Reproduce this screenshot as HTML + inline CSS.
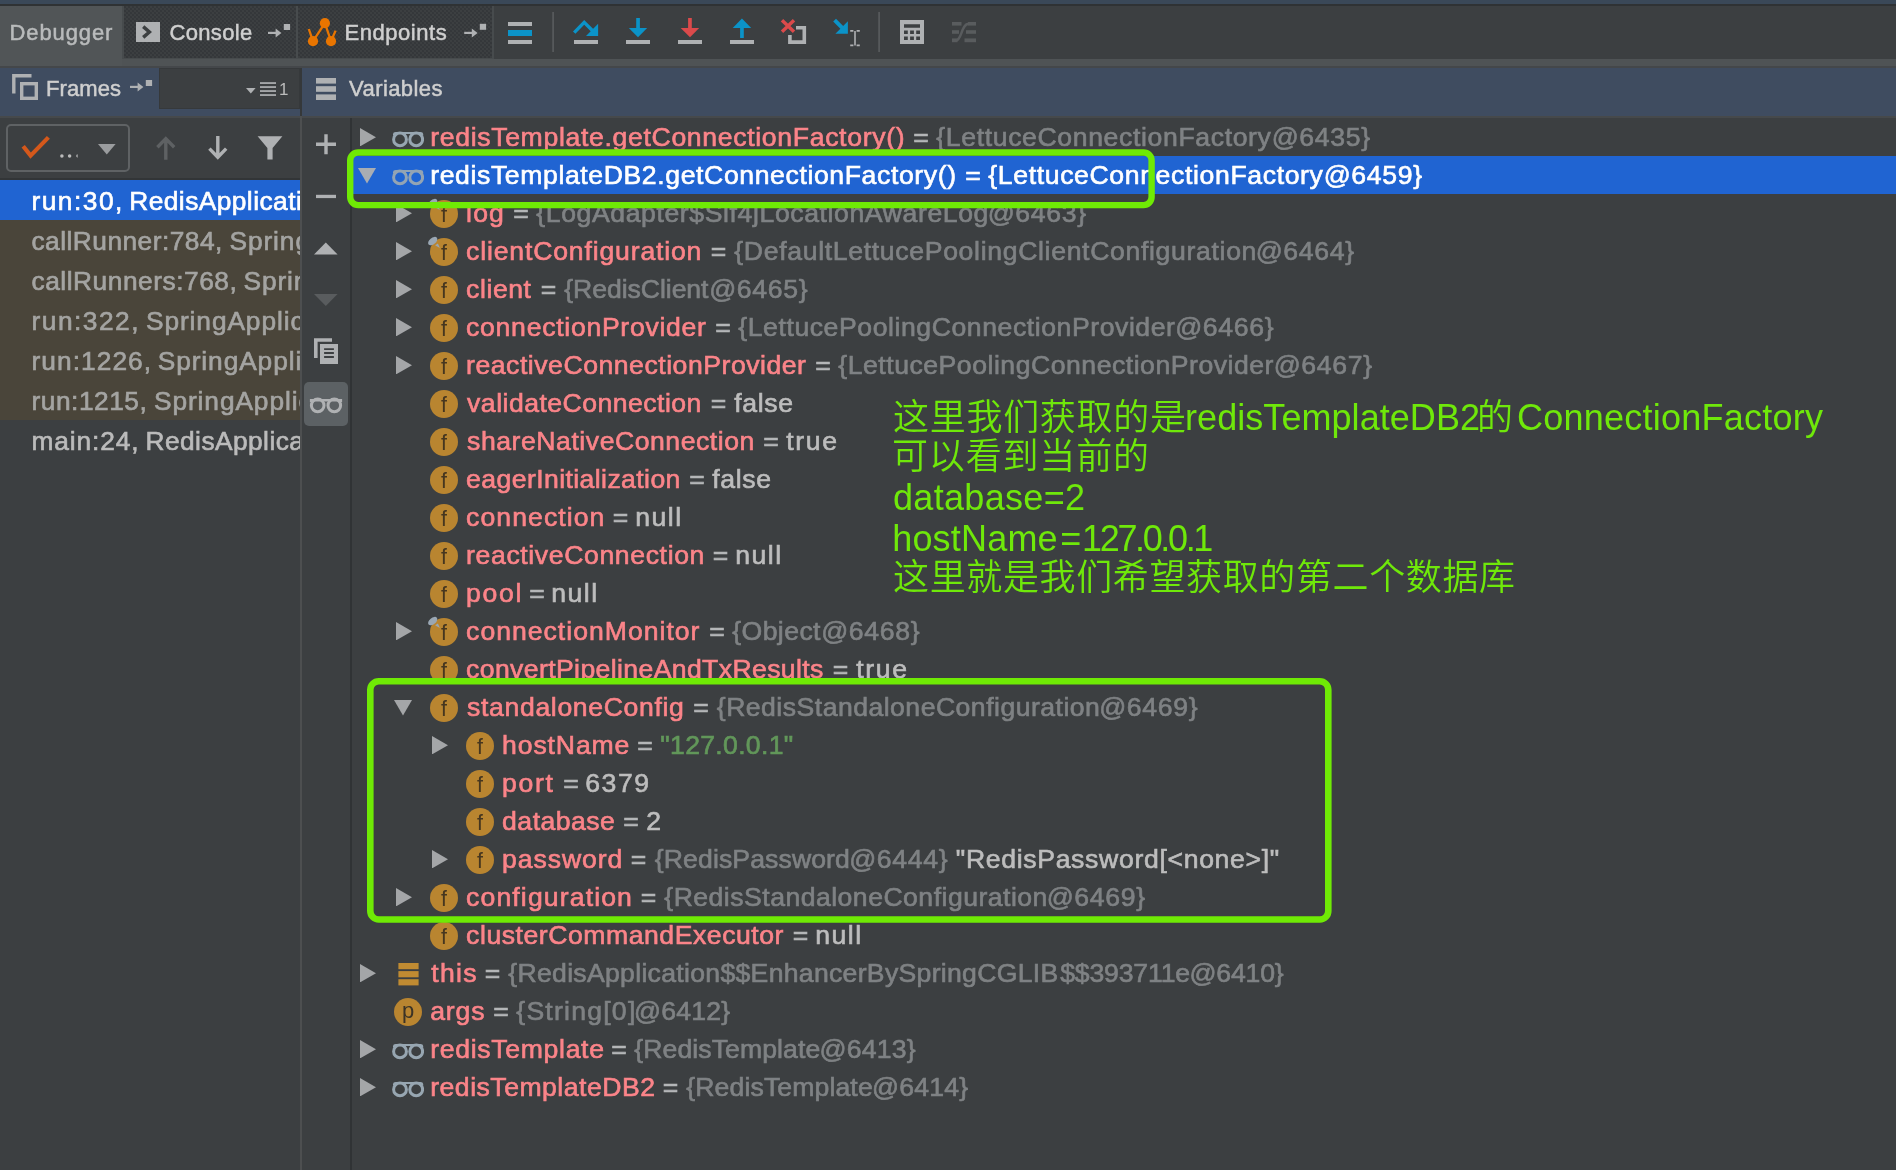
<!DOCTYPE html>
<html lang="zh"><head><meta charset="utf-8"><title>Debugger</title>
<style>
*{margin:0;padding:0;box-sizing:border-box}
html,body{width:1896px;height:1170px;overflow:hidden;background:#3c3f41}
body{position:relative;font-family:"Liberation Sans", "Noto Sans CJK SC", sans-serif;color:#bbb}
#root{position:absolute;left:0;top:0;width:1896px;height:1170px;overflow:hidden;will-change:transform}
.ab{position:absolute;display:block}
.p{display:inline-block;width:0;position:relative;white-space:pre;vertical-align:baseline}
.sp{font-size:0}
.t{position:absolute;white-space:pre;font-size:26.6px;height:38px;line-height:38.6px;-webkit-text-stroke:0.65px currentColor}
.n{color:#fb8489}
.e{color:#b4b6b8}
.g{color:#7f8284}
.w{color:#bdbdbd}
.s{color:#62975a}
.sel{color:#fff}
.ft{position:absolute;white-space:pre;font-size:26.3px;height:40px;line-height:42.4px;-webkit-text-stroke:0.65px currentColor}
.fsel{color:#fff}
.fdim{color:#a4a4a2}
.fnorm{color:#bbbbbb}
.hl{position:absolute;white-space:pre;color:#cfcfcf;-webkit-text-stroke:0.5px currentColor}
.dbg{color:#b9bbbc}
.dots{background-color:#3c3f41;background-image:radial-gradient(circle at 1px 1px,#34373a 0.7px,transparent 0.85px),radial-gradient(circle at 3px 3px,#34373a 0.7px,transparent 0.85px);background-size:4px 4px}
.an{position:absolute;white-space:pre;font-size:36px;height:50px;line-height:50px;color:#6fe80a;font-weight:350}
</style></head>
<body><div id="root">
<!-- top strip -->
<div class="ab" style="left:0;top:0;width:1896px;height:4px;background:#3a4858"></div>
<div class="ab" style="left:0;top:4px;width:1896px;height:2px;background:#2f3234"></div>
<!-- tab bar -->
<div class="ab" style="left:0;top:6px;width:1896px;height:52px;background:#3c3f41"></div>
<div class="ab" style="left:0;top:6px;width:122px;height:60px;background:#515557"></div>
<div class="ab" style="left:122px;top:6px;width:372px;height:53px;background:#474b4d"></div>
<div class="ab dots" style="left:124px;top:6px;width:172px;height:52px"></div>
<div class="ab dots" style="left:298px;top:6px;width:194px;height:52px"></div>
<div class="ab" style="left:122px;top:59px;width:1774px;height:7px;background:#4f5355"></div>
<div class="ab" style="left:0;top:66px;width:1896px;height:1.5px;background:#44474a"></div>
<!-- header band -->
<div class="ab" style="left:0;top:67.5px;width:1896px;height:48px;background:#3f4c60"></div>
<div class="ab" style="left:0;top:115.5px;width:1896px;height:2.5px;background:#46494b"></div>
<div class="ab" style="left:159px;top:67.5px;width:141px;height:41.5px;background:#3c3f41;border:1px solid #36393b"></div>
<!-- splitters -->
<div class="ab" style="left:300px;top:67.5px;width:2px;height:1103px;background:#35383a"></div>
<div class="ab" style="left:300.4px;top:116px;width:1.5px;height:1054px;background:#4d4f50"></div>
<div class="ab" style="left:350px;top:118px;width:2px;height:1052px;background:#303335"></div>
<div class="ab" style="left:0;top:178px;width:300px;height:2px;background:#323537"></div>

<!-- tab icons -->
<svg class="ab" style="left:0;top:0" width="1000" height="118" viewBox="0 0 1000 118">
 <!-- console icon -->
 <rect x="136" y="22" width="24" height="20" fill="#afb1b3"/>
 <path d="M143.2 26.6 L149.4 32 L143.2 37.4" fill="none" stroke="#3c3f41" stroke-width="3.4"/>
 <!-- console pin arrow -->
 <g fill="#afb1b3">
  <rect x="268" y="31.8" width="9" height="2.2"/><path d="M275.6 28.4 L281.4 32.9 L275.6 37.6Z"/><rect x="283.8" y="24" width="6.3" height="6"/>
  <rect x="464.2" y="31.8" width="9" height="2.2"/><path d="M471.8 28.4 L477.6 32.9 L471.8 37.6Z"/><rect x="479.8" y="23.8" width="6.3" height="6"/>
  <rect x="130" y="85.8" width="9" height="2.2"/><path d="M137.6 82.4 L143.4 86.9 L137.6 91.6Z"/><rect x="145.8" y="80" width="6.3" height="6"/>
 </g>
 <!-- endpoints icon -->
 <g fill="#e97500" stroke="#e97500">
  <circle cx="324.9" cy="23.2" r="5.1" stroke="none"/><circle cx="313" cy="41.2" r="5.1" stroke="none"/><circle cx="331" cy="41.2" r="5.1" stroke="none"/>
  <path d="M324.9 23.2 L313 41.2 M324.9 23.2 L331 41.2 M313 41.2 L308.8 29 M331 41.2 L335.6 30.6" stroke-width="2.3" fill="none"/>
 </g>
 <!-- show execution point -->
 <rect x="508" y="22" width="24" height="4" fill="#afb1b3"/><rect x="508" y="30" width="24" height="6" fill="#0b93c8"/><rect x="508" y="40" width="24" height="4" fill="#afb1b3"/>
 <rect x="552.2" y="12" width="1.8" height="40" fill="#56595b"/>
 <!-- step over -->
 <path d="M574.2 32.6 L584.2 22.4 L592.6 30.8" fill="none" stroke="#0b93c8" stroke-width="3.4"/>
 <path d="M598.1 23.8 L598.1 35.9 L586 35.9Z" fill="#0b93c8"/>
 <rect x="574" y="40" width="24" height="4" fill="#afb1b3"/>
 <!-- step into -->
 <rect x="636.2" y="18" width="3.7" height="11" fill="#0b93c8"/><path d="M628.8 28 L647.2 28 L638 37.2Z" fill="#0b93c8"/>
 <rect x="626" y="40" width="24" height="4" fill="#afb1b3"/>
 <!-- force step into -->
 <rect x="688.1" y="18" width="3.7" height="11" fill="#db4a4b"/><path d="M680.7 28 L699.2 28 L690 37.2Z" fill="#db4a4b"/>
 <rect x="678" y="40" width="24" height="4" fill="#afb1b3"/>
 <!-- step out -->
 <rect x="740.1" y="27" width="3.7" height="11" fill="#0b93c8"/><path d="M732.7 27.9 L751.2 27.9 L741.95 18.6Z" fill="#0b93c8"/>
 <rect x="730" y="40" width="24" height="4" fill="#afb1b3"/>
 <!-- drop frame -->
 <path d="M796 27.8 L804.3 27.8 L804.3 42.1 L789.9 42.1 L789.9 35" fill="none" stroke="#afb1b3" stroke-width="3.6"/>
 <path d="M782 20.2 L794 31.8 M794 20.2 L782 31.8" stroke="#db4a4b" stroke-width="3.4" fill="none"/>
 <!-- run to cursor -->
 <path d="M834.6 20.2 L844 29.6" stroke="#0b93c8" stroke-width="4" fill="none"/>
 <path d="M847.9 21.3 L847.9 33.8 L835.4 33.8Z" fill="#0b93c8"/>
 <path d="M855 31 L855 45.4 M850.2 30.9 L853.4 30.9 M856.6 30.9 L859.8 30.9 M850.2 45.4 L853.4 45.4 M856.6 45.4 L859.8 45.4" stroke="#afb1b3" stroke-width="1.6" fill="none"/>
 <rect x="878.2" y="12" width="1.8" height="40" fill="#56595b"/>
 <!-- calculator -->
 <path fill-rule="evenodd" fill="#afb1b3" d="M900 20h24v24h-24z M904 24.2v3.5h16v-3.5z M904 30.4v3.5h3.8v-3.5z M910.1 30.4v3.5h3.8v-3.5z M916.2 30.4v3.5h3.8v-3.5z M904 36.4v3.5h3.8v-3.5z M910.1 36.4v3.5h3.8v-3.5z M916.2 36.4v3.5h3.8v-3.5z"/>
 <!-- trace (disabled) -->
 <g fill="#595c5e"><rect x="952" y="22" width="9.5" height="3.6"/><rect x="952" y="30.2" width="7" height="3.6"/><rect x="952" y="38.4" width="5.5" height="3.8"/>
 <rect x="968" y="22" width="8" height="3.6"/><rect x="966" y="30.2" width="10" height="3.6"/><rect x="964.5" y="38.4" width="11.5" height="3.8"/></g>
 <path d="M956 40.4 C962 40.4 961 23.8 969 23.8" fill="none" stroke="#595c5e" stroke-width="2.4"/>
 <!-- frames icon -->
 <path d="M13.8 93.5 L13.8 75.8 L31.5 75.8" fill="none" stroke="#afb1b3" stroke-width="3.4"/>
 <rect x="21.7" y="83.7" width="14.6" height="14.6" fill="none" stroke="#afb1b3" stroke-width="3.4"/>
 <!-- thread dropdown mini -->
 <path d="M246 88 L255.6 88 L250.8 93.6Z" fill="#afb1b3"/>
 <g fill="#afb1b3"><rect x="260" y="82.2" width="16" height="1.7"/><rect x="260" y="86.2" width="16" height="1.7"/><rect x="260" y="90.2" width="16" height="1.7"/><rect x="260" y="94.2" width="16" height="1.7"/></g>
 <!-- variables icon -->
 <g fill="#afb1b3"><rect x="316" y="78" width="20" height="5.6"/><rect x="316" y="86.2" width="20" height="5.6"/><rect x="316" y="94.4" width="20" height="5.6"/></g>
</svg>
<span class="ab" style="left:279px;top:80px;font-size:17px;line-height:20px;color:#bcbcbc">1</span>

<!-- frames toolbar -->
<div class="ab" style="left:6px;top:124px;width:124px;height:48px;border:2px solid #5f6264;border-radius:5px"></div>
<svg class="ab" style="left:0;top:118px" width="360" height="320" viewBox="0 118 360 320">
 <path d="M23.2 146.2 L30.6 155.6 L48.4 137.4" fill="none" stroke="#d4581b" stroke-width="4.2"/>
 <g fill="#bbb"><circle cx="61.9" cy="156" r="1.75"/><circle cx="69.6" cy="156" r="1.75"/><path d="M77.6 154.3 A1.75 1.75 0 0 0 77.6 157.7Z"/></g>
 <path d="M98 144 L115.6 144 L106.8 154.6Z" fill="#9a9c9e"/>
 <!-- up (disabled) -->
 <path d="M165.8 159.8 L165.8 139.4 M157.4 147.2 L165.8 138.6 L174.2 147.2" fill="none" stroke="#5e6163" stroke-width="3.4"/>
 <!-- down -->
 <path d="M217.8 136 L217.8 156.4 M209.4 148.6 L217.8 157.2 L226.2 148.6" fill="none" stroke="#afb1b3" stroke-width="3.4"/>
 <!-- filter -->
 <path d="M257.6 136.2 L282.4 136.2 L272.6 148 L272.6 159.6 L267.4 159.6 L267.4 148Z" fill="#afb1b3"/>
 <!-- vars side toolbar -->
 <path d="M316 144.3 L336 144.3 M326 134.3 L326 154.3" stroke="#afb1b3" stroke-width="3.4" fill="none"/>
 <rect x="316" y="194.8" width="20" height="3.3" fill="#afb1b3"/>
 <path d="M314 254.6 L337.6 254.6 L325.8 242.6Z" fill="#afb1b3"/>
 <path d="M314 294 L337.6 294 L325.8 306Z" fill="#595c5e"/>
 <path d="M315.8 358 L315.8 340 L332 340" fill="none" stroke="#afb1b3" stroke-width="3.6"/>
 <path fill-rule="evenodd" fill="#afb1b3" d="M320 344.1h18v19.8h-18z M324.1 348.2v1.8h9.8v-1.8z M324.1 352.1v1.8h9.8v-1.8z M324.1 356.1v1.8h9.8v-1.8z"/>
 <rect x="304" y="382" width="44" height="44" rx="5" fill="#5c6164"/>
 <g fill="none" stroke="#afb1b3" stroke-width="3"><circle cx="317.7" cy="405.4" r="6.3"/><circle cx="334.3" cy="405.4" r="6.3"/><path d="M311.2 402 L311.2 400.2 L340.8 400.2 L340.8 402" stroke-width="2.6"/></g>
</svg>

<!-- variables tree -->
<svg class="ab" style="left:360px;top:127.6px" width="16" height="18.4" viewBox="0 0 16 18.4"><path d="M0 0 L16 9.2 L0 18.4Z" fill="#a4a6a8"/></svg>
<svg class="ab" style="left:392px;top:128.5px" width="32" height="20" viewBox="0 0 32 20"><g fill="none" stroke="#97a6b1" stroke-width="3"><circle cx="8" cy="10.4" r="6.4"/><circle cx="24.2" cy="10.4" r="6.4"/></g><path d="M1 6.4 L1 5 Q1.2 2.9 3.6 2.9 L28.6 2.9 Q31 2.9 31.2 5 L31.2 6.4 L28 4.9 L4.2 4.9Z" fill="#97a6b1"/></svg>
<div class="t" style="left:430.20px;top:118px"><span class="p n" id="r0_0" style="left:0.00px;letter-spacing:0.672px">redisTemplate.getConnectionFactory()</span><span class="sp"> </span><span class="p e" id="r0_1" style="left:483.10px;letter-spacing:0.000px">=</span><span class="sp"> </span><span class="p g" id="r0_2" style="left:506.10px;letter-spacing:0.637px">{LettuceConnectionFactory</span><span class="p g" id="r0_3" style="left:841.50px;letter-spacing:0.689px">@6435}</span></div>
<div class="ab" style="left:352px;top:156px;width:1544px;height:38px;background:#2064d2"></div>
<svg class="ab" style="left:357.8px;top:168.25px" width="18" height="15.5" viewBox="0 0 18 15.5"><path d="M0 0 L18 0 L9 15.5Z" fill="#a9adb3"/></svg>
<svg class="ab" style="left:392px;top:166.5px" width="32" height="20" viewBox="0 0 32 20"><g fill="none" stroke="#93a4b4" stroke-width="3"><circle cx="8" cy="10.4" r="6.4"/><circle cx="24.2" cy="10.4" r="6.4"/></g><path d="M1 6.4 L1 5 Q1.2 2.9 3.6 2.9 L28.6 2.9 Q31 2.9 31.2 5 L31.2 6.4 L28 4.9 L4.2 4.9Z" fill="#93a4b4"/></svg>
<div class="t" style="left:430.20px;top:156px"><span class="p sel" id="r1_0" style="left:0.00px;letter-spacing:0.613px">redisTemplateDB2.getConnectionFactory()</span><span class="sp"> </span><span class="p sel" id="r1_1" style="left:535.10px;letter-spacing:0.000px">=</span><span class="sp"> </span><span class="p sel" id="r1_2" style="left:558.10px;letter-spacing:0.637px">{LettuceConnectionFactory</span><span class="p sel" id="r1_3" style="left:893.50px;letter-spacing:0.689px">@6459}</span></div>
<svg class="ab" style="left:396px;top:203.6px" width="16" height="18.4" viewBox="0 0 16 18.4"><path d="M0 0 L16 9.2 L0 18.4Z" fill="#a4a6a8"/></svg>
<svg class="ab" style="left:426px;top:195.5px" width="36" height="36" viewBox="-4 -4 36 36"><circle cx="14" cy="14" r="14" fill="#b98530"/><text x="14" y="21.6" text-anchor="middle" font-family='"Liberation Sans", sans-serif' font-size="21.5" fill="#46361f">f</text><g fill="#9aa7b4"><ellipse cx="2.7" cy="3.1" rx="5.4" ry="3.2" transform="rotate(-40 2.7 3.1)"/><path d="M5.1 7.3 L7.9 5.6 L9.9 10Z"/></g></svg>
<div class="t" style="left:466.10px;top:194px"><span class="p n" id="r2_0" style="left:0.00px;letter-spacing:1.151px">log</span><span class="sp"> </span><span class="p e" id="r2_1" style="left:47.20px;letter-spacing:0.000px">=</span><span class="sp"> </span><span class="p g" id="r2_2" style="left:70.20px;letter-spacing:0.605px">{LogAdapter$Slf4jLocationAwareLog</span><span class="p g" id="r2_3" style="left:521.60px;letter-spacing:0.689px">@6463}</span></div>
<svg class="ab" style="left:396px;top:241.6px" width="16" height="18.4" viewBox="0 0 16 18.4"><path d="M0 0 L16 9.2 L0 18.4Z" fill="#a4a6a8"/></svg>
<svg class="ab" style="left:426px;top:233.5px" width="36" height="36" viewBox="-4 -4 36 36"><circle cx="14" cy="14" r="14" fill="#b98530"/><text x="14" y="21.6" text-anchor="middle" font-family='"Liberation Sans", sans-serif' font-size="21.5" fill="#46361f">f</text><g fill="#9aa7b4"><ellipse cx="2.7" cy="3.1" rx="5.4" ry="3.2" transform="rotate(-40 2.7 3.1)"/><path d="M5.1 7.3 L7.9 5.6 L9.9 10Z"/></g></svg>
<div class="t" style="left:466.10px;top:232px"><span class="p n" id="r3_0" style="left:0.00px;letter-spacing:0.835px">clientConfiguration</span><span class="sp"> </span><span class="p e" id="r3_1" style="left:244.70px;letter-spacing:0.000px">=</span><span class="sp"> </span><span class="p g" id="r3_2" style="left:268.20px;letter-spacing:0.671px">{DefaultLettucePoolingClientConfiguration</span><span class="p g" id="r3_3" style="left:789.60px;letter-spacing:0.689px">@6464}</span></div>
<svg class="ab" style="left:396px;top:279.6px" width="16" height="18.4" viewBox="0 0 16 18.4"><path d="M0 0 L16 9.2 L0 18.4Z" fill="#a4a6a8"/></svg>
<svg class="ab" style="left:426px;top:271.5px" width="36" height="36" viewBox="-4 -4 36 36"><circle cx="14" cy="14" r="14" fill="#b98530"/><text x="14" y="21.6" text-anchor="middle" font-family='"Liberation Sans", sans-serif' font-size="21.5" fill="#46361f">f</text></svg>
<div class="t" style="left:466.10px;top:270px"><span class="p n" id="r4_0" style="left:0.00px;letter-spacing:0.561px">client</span><span class="sp"> </span><span class="p e" id="r4_1" style="left:74.70px;letter-spacing:0.000px">=</span><span class="sp"> </span><span class="p g" id="r4_2" style="left:98.20px;letter-spacing:-0.061px">{RedisClient</span><span class="p g" id="r4_3" style="left:243.10px;letter-spacing:0.689px">@6465}</span></div>
<svg class="ab" style="left:396px;top:317.6px" width="16" height="18.4" viewBox="0 0 16 18.4"><path d="M0 0 L16 9.2 L0 18.4Z" fill="#a4a6a8"/></svg>
<svg class="ab" style="left:426px;top:309.5px" width="36" height="36" viewBox="-4 -4 36 36"><circle cx="14" cy="14" r="14" fill="#b98530"/><text x="14" y="21.6" text-anchor="middle" font-family='"Liberation Sans", sans-serif' font-size="21.5" fill="#46361f">f</text></svg>
<div class="t" style="left:466.10px;top:308px"><span class="p n" id="r5_0" style="left:0.00px;letter-spacing:0.718px">connectionProvider</span><span class="sp"> </span><span class="p e" id="r5_1" style="left:249.20px;letter-spacing:0.000px">=</span><span class="sp"> </span><span class="p g" id="r5_2" style="left:272.20px;letter-spacing:0.571px">{LettucePoolingConnectionProvider</span><span class="p g" id="r5_3" style="left:709.10px;letter-spacing:0.689px">@6466}</span></div>
<svg class="ab" style="left:396px;top:355.6px" width="16" height="18.4" viewBox="0 0 16 18.4"><path d="M0 0 L16 9.2 L0 18.4Z" fill="#a4a6a8"/></svg>
<svg class="ab" style="left:426px;top:347.5px" width="36" height="36" viewBox="-4 -4 36 36"><circle cx="14" cy="14" r="14" fill="#b98530"/><text x="14" y="21.6" text-anchor="middle" font-family='"Liberation Sans", sans-serif' font-size="21.5" fill="#46361f">f</text></svg>
<div class="t" style="left:466.10px;top:346px"><span class="p n" id="r6_0" style="left:0.00px;letter-spacing:0.527px">reactiveConnectionProvider</span><span class="sp"> </span><span class="p e" id="r6_1" style="left:349.20px;letter-spacing:0.000px">=</span><span class="sp"> </span><span class="p g" id="r6_2" style="left:372.20px;letter-spacing:0.524px">{LettucePoolingConnectionProvider</span><span class="p g" id="r6_3" style="left:807.60px;letter-spacing:0.689px">@6467}</span></div>
<svg class="ab" style="left:426px;top:385.5px" width="36" height="36" viewBox="-4 -4 36 36"><circle cx="14" cy="14" r="14" fill="#b98530"/><text x="14" y="21.6" text-anchor="middle" font-family='"Liberation Sans", sans-serif' font-size="21.5" fill="#46361f">f</text></svg>
<div class="t" style="left:467.10px;top:384px"><span class="p n" id="r7_0" style="left:0.00px;letter-spacing:0.476px">validateConnection</span><span class="sp"> </span><span class="p e" id="r7_1" style="left:243.70px;letter-spacing:0.000px">=</span><span class="sp"> </span><span class="p w" id="r7_2" style="left:267.20px;letter-spacing:0.654px">false</span></div>
<svg class="ab" style="left:426px;top:423.5px" width="36" height="36" viewBox="-4 -4 36 36"><circle cx="14" cy="14" r="14" fill="#b98530"/><text x="14" y="21.6" text-anchor="middle" font-family='"Liberation Sans", sans-serif' font-size="21.5" fill="#46361f">f</text></svg>
<div class="t" style="left:467.10px;top:422px"><span class="p n" id="r8_0" style="left:0.00px;letter-spacing:0.542px">shareNativeConnection</span><span class="sp"> </span><span class="p e" id="r8_1" style="left:296.20px;letter-spacing:0.000px">=</span><span class="sp"> </span><span class="p w" id="r8_2" style="left:319.20px;letter-spacing:1.655px">true</span></div>
<svg class="ab" style="left:426px;top:461.5px" width="36" height="36" viewBox="-4 -4 36 36"><circle cx="14" cy="14" r="14" fill="#b98530"/><text x="14" y="21.6" text-anchor="middle" font-family='"Liberation Sans", sans-serif' font-size="21.5" fill="#46361f">f</text></svg>
<div class="t" style="left:466.10px;top:460px"><span class="p n" id="r9_0" style="left:0.00px;letter-spacing:0.407px">eagerInitialization</span><span class="sp"> </span><span class="p e" id="r9_1" style="left:223.20px;letter-spacing:0.000px">=</span><span class="sp"> </span><span class="p w" id="r9_2" style="left:246.20px;letter-spacing:0.654px">false</span></div>
<svg class="ab" style="left:426px;top:499.5px" width="36" height="36" viewBox="-4 -4 36 36"><circle cx="14" cy="14" r="14" fill="#b98530"/><text x="14" y="21.6" text-anchor="middle" font-family='"Liberation Sans", sans-serif' font-size="21.5" fill="#46361f">f</text></svg>
<div class="t" style="left:466.10px;top:498px"><span class="p n" id="r10_0" style="left:0.00px;letter-spacing:1.073px">connection</span><span class="sp"> </span><span class="p e" id="r10_1" style="left:146.70px;letter-spacing:0.000px">=</span><span class="sp"> </span><span class="p w" id="r10_2" style="left:169.20px;letter-spacing:1.504px">null</span></div>
<svg class="ab" style="left:426px;top:537.5px" width="36" height="36" viewBox="-4 -4 36 36"><circle cx="14" cy="14" r="14" fill="#b98530"/><text x="14" y="21.6" text-anchor="middle" font-family='"Liberation Sans", sans-serif' font-size="21.5" fill="#46361f">f</text></svg>
<div class="t" style="left:466.10px;top:536px"><span class="p n" id="r11_0" style="left:0.00px;letter-spacing:0.625px">reactiveConnection</span><span class="sp"> </span><span class="p e" id="r11_1" style="left:246.70px;letter-spacing:0.000px">=</span><span class="sp"> </span><span class="p w" id="r11_2" style="left:269.20px;letter-spacing:1.504px">null</span></div>
<svg class="ab" style="left:426px;top:575.5px" width="36" height="36" viewBox="-4 -4 36 36"><circle cx="14" cy="14" r="14" fill="#b98530"/><text x="14" y="21.6" text-anchor="middle" font-family='"Liberation Sans", sans-serif' font-size="21.5" fill="#46361f">f</text></svg>
<div class="t" style="left:466.10px;top:574px"><span class="p n" id="r12_0" style="left:0.00px;letter-spacing:1.710px">pool</span><span class="sp"> </span><span class="p e" id="r12_1" style="left:63.20px;letter-spacing:0.000px">=</span><span class="sp"> </span><span class="p w" id="r12_2" style="left:85.20px;letter-spacing:1.504px">null</span></div>
<svg class="ab" style="left:396px;top:621.6px" width="16" height="18.4" viewBox="0 0 16 18.4"><path d="M0 0 L16 9.2 L0 18.4Z" fill="#a4a6a8"/></svg>
<svg class="ab" style="left:426px;top:613.5px" width="36" height="36" viewBox="-4 -4 36 36"><circle cx="14" cy="14" r="14" fill="#b98530"/><text x="14" y="21.6" text-anchor="middle" font-family='"Liberation Sans", sans-serif' font-size="21.5" fill="#46361f">f</text><g fill="#9aa7b4"><ellipse cx="2.7" cy="3.1" rx="5.4" ry="3.2" transform="rotate(-40 2.7 3.1)"/><path d="M5.1 7.3 L7.9 5.6 L9.9 10Z"/></g></svg>
<div class="t" style="left:466.10px;top:612px"><span class="p n" id="r13_0" style="left:0.00px;letter-spacing:1.003px">connectionMonitor</span><span class="sp"> </span><span class="p e" id="r13_1" style="left:243.20px;letter-spacing:0.000px">=</span><span class="sp"> </span><span class="p g" id="r13_2" style="left:266.20px;letter-spacing:0.408px">{Object</span><span class="p g" id="r13_3" style="left:355.10px;letter-spacing:0.689px">@6468}</span></div>
<svg class="ab" style="left:426px;top:651.5px" width="36" height="36" viewBox="-4 -4 36 36"><circle cx="14" cy="14" r="14" fill="#b98530"/><text x="14" y="21.6" text-anchor="middle" font-family='"Liberation Sans", sans-serif' font-size="21.5" fill="#46361f">f</text></svg>
<div class="t" style="left:466.10px;top:650px"><span class="p n" id="r14_0" style="left:0.00px;letter-spacing:0.382px">convertPipelineAndTxResults</span><span class="sp"> </span><span class="p e" id="r14_1" style="left:366.70px;letter-spacing:0.000px">=</span><span class="sp"> </span><span class="p w" id="r14_2" style="left:390.20px;letter-spacing:1.655px">true</span></div>
<svg class="ab" style="left:393.8px;top:700.25px" width="18" height="15.5" viewBox="0 0 18 15.5"><path d="M0 0 L18 0 L9 15.5Z" fill="#a4a6a8"/></svg>
<svg class="ab" style="left:426px;top:689.5px" width="36" height="36" viewBox="-4 -4 36 36"><circle cx="14" cy="14" r="14" fill="#b98530"/><text x="14" y="21.6" text-anchor="middle" font-family='"Liberation Sans", sans-serif' font-size="21.5" fill="#46361f">f</text></svg>
<div class="t" style="left:467.10px;top:688px"><span class="p n" id="r15_0" style="left:0.00px;letter-spacing:0.653px">standaloneConfig</span><span class="sp"> </span><span class="p e" id="r15_1" style="left:226.20px;letter-spacing:0.000px">=</span><span class="sp"> </span><span class="p g" id="r15_2" style="left:249.70px;letter-spacing:0.481px">{RedisStandaloneConfiguration</span><span class="p g" id="r15_3" style="left:632.10px;letter-spacing:0.689px">@6469}</span></div>
<svg class="ab" style="left:432px;top:735.6px" width="16" height="18.4" viewBox="0 0 16 18.4"><path d="M0 0 L16 9.2 L0 18.4Z" fill="#a4a6a8"/></svg>
<svg class="ab" style="left:462px;top:727.5px" width="36" height="36" viewBox="-4 -4 36 36"><circle cx="14" cy="14" r="14" fill="#b98530"/><text x="14" y="21.6" text-anchor="middle" font-family='"Liberation Sans", sans-serif' font-size="21.5" fill="#46361f">f</text></svg>
<div class="t" style="left:502.10px;top:726px"><span class="p n" id="r16_0" style="left:0.00px;letter-spacing:0.869px">hostName</span><span class="sp"> </span><span class="p e" id="r16_1" style="left:135.20px;letter-spacing:0.000px">=</span><span class="sp"> </span><span class="p s" id="r16_2" style="left:158.20px;letter-spacing:0.315px">&quot;127.0.0.1&quot;</span></div>
<svg class="ab" style="left:462px;top:765.5px" width="36" height="36" viewBox="-4 -4 36 36"><circle cx="14" cy="14" r="14" fill="#b98530"/><text x="14" y="21.6" text-anchor="middle" font-family='"Liberation Sans", sans-serif' font-size="21.5" fill="#46361f">f</text></svg>
<div class="t" style="left:502.10px;top:764px"><span class="p n" id="r17_0" style="left:0.00px;letter-spacing:1.688px">port</span><span class="sp"> </span><span class="p e" id="r17_1" style="left:61.20px;letter-spacing:0.000px">=</span><span class="sp"> </span><span class="p w" id="r17_2" style="left:83.20px;letter-spacing:1.543px">6379</span></div>
<svg class="ab" style="left:462px;top:803.5px" width="36" height="36" viewBox="-4 -4 36 36"><circle cx="14" cy="14" r="14" fill="#b98530"/><text x="14" y="21.6" text-anchor="middle" font-family='"Liberation Sans", sans-serif' font-size="21.5" fill="#46361f">f</text></svg>
<div class="t" style="left:502.10px;top:802px"><span class="p n" id="r18_0" style="left:0.00px;letter-spacing:0.481px">database</span><span class="sp"> </span><span class="p e" id="r18_1" style="left:121.20px;letter-spacing:0.000px">=</span><span class="sp"> </span><span class="p w" id="r18_2" style="left:144.20px;letter-spacing:0.000px">2</span></div>
<svg class="ab" style="left:432px;top:849.6px" width="16" height="18.4" viewBox="0 0 16 18.4"><path d="M0 0 L16 9.2 L0 18.4Z" fill="#a4a6a8"/></svg>
<svg class="ab" style="left:462px;top:841.5px" width="36" height="36" viewBox="-4 -4 36 36"><circle cx="14" cy="14" r="14" fill="#b98530"/><text x="14" y="21.6" text-anchor="middle" font-family='"Liberation Sans", sans-serif' font-size="21.5" fill="#46361f">f</text></svg>
<div class="t" style="left:502.10px;top:840px"><span class="p n" id="r19_0" style="left:0.00px;letter-spacing:0.925px">password</span><span class="sp"> </span><span class="p e" id="r19_1" style="left:128.70px;letter-spacing:0.000px">=</span><span class="sp"> </span><span class="p g" id="r19_2" style="left:152.70px;letter-spacing:0.112px">{RedisPassword</span><span class="p g" id="r19_3" style="left:347.10px;letter-spacing:0.689px">@6444}</span><span class="sp"> </span><span class="p w" id="r19_4" style="left:453.70px;letter-spacing:0.673px">&quot;RedisPassword[&lt;none&gt;]&quot;</span></div>
<svg class="ab" style="left:396px;top:887.6px" width="16" height="18.4" viewBox="0 0 16 18.4"><path d="M0 0 L16 9.2 L0 18.4Z" fill="#a4a6a8"/></svg>
<svg class="ab" style="left:426px;top:879.5px" width="36" height="36" viewBox="-4 -4 36 36"><circle cx="14" cy="14" r="14" fill="#b98530"/><text x="14" y="21.6" text-anchor="middle" font-family='"Liberation Sans", sans-serif' font-size="21.5" fill="#46361f">f</text></svg>
<div class="t" style="left:466.10px;top:878px"><span class="p n" id="r20_0" style="left:0.00px;letter-spacing:1.126px">configuration</span><span class="sp"> </span><span class="p e" id="r20_1" style="left:174.70px;letter-spacing:0.000px">=</span><span class="sp"> </span><span class="p g" id="r20_2" style="left:198.20px;letter-spacing:0.481px">{RedisStandaloneConfiguration</span><span class="p g" id="r20_3" style="left:580.60px;letter-spacing:0.689px">@6469}</span></div>
<svg class="ab" style="left:426px;top:917.5px" width="36" height="36" viewBox="-4 -4 36 36"><circle cx="14" cy="14" r="14" fill="#b98530"/><text x="14" y="21.6" text-anchor="middle" font-family='"Liberation Sans", sans-serif' font-size="21.5" fill="#46361f">f</text></svg>
<div class="t" style="left:466.10px;top:916px"><span class="p n" id="r21_0" style="left:0.00px;letter-spacing:0.543px">clusterCommandExecutor</span><span class="sp"> </span><span class="p e" id="r21_1" style="left:326.70px;letter-spacing:0.000px">=</span><span class="sp"> </span><span class="p w" id="r21_2" style="left:349.20px;letter-spacing:1.504px">null</span></div>
<svg class="ab" style="left:360px;top:963.6px" width="16" height="18.4" viewBox="0 0 16 18.4"><path d="M0 0 L16 9.2 L0 18.4Z" fill="#a4a6a8"/></svg>
<svg class="ab" style="left:397.5px;top:962.6px" width="21" height="23" viewBox="0 0 21 23"><g fill="#c08b32"><rect x="0.4" y="0" width="20.2" height="6.2"/><rect x="0.4" y="8.1" width="20.2" height="6.2"/><rect x="0.4" y="16.2" width="20.2" height="6.2"/></g></svg>
<div class="t" style="left:431.20px;top:954px"><span class="p n" id="r22_0" style="left:0.00px;letter-spacing:1.304px">this</span><span class="sp"> </span><span class="p e" id="r22_1" style="left:53.60px;letter-spacing:0.000px">=</span><span class="sp"> </span><span class="p g" id="r22_2" style="left:77.10px;letter-spacing:0.303px">{RedisApplication$$EnhancerBySpringCGLIB</span><span class="p g" id="r22_3" style="left:629.00px;letter-spacing:-0.156px">$$393711e</span><span class="p g" id="r22_4" style="left:758.30px;letter-spacing:-0.171px">@6410}</span></div>
<svg class="ab" style="left:390px;top:993.5px" width="36" height="36" viewBox="-4 -4 36 36"><circle cx="14" cy="14" r="14" fill="#b98530"/><text x="14" y="20.4" text-anchor="middle" font-family='"Liberation Sans", sans-serif' font-size="22" fill="#3b3326">p</text></svg>
<div class="t" style="left:430.20px;top:992px"><span class="p n" id="r23_0" style="left:0.00px;letter-spacing:0.855px">args</span><span class="sp"> </span><span class="p e" id="r23_1" style="left:63.10px;letter-spacing:0.000px">=</span><span class="sp"> </span><span class="p g" id="r23_2" style="left:86.10px;letter-spacing:1.230px">{String[0]</span><span class="p g" id="r23_3" style="left:203.80px;letter-spacing:0.229px">@6412}</span></div>
<svg class="ab" style="left:360px;top:1039.6px" width="16" height="18.4" viewBox="0 0 16 18.4"><path d="M0 0 L16 9.2 L0 18.4Z" fill="#a4a6a8"/></svg>
<svg class="ab" style="left:392px;top:1040.5px" width="32" height="20" viewBox="0 0 32 20"><g fill="none" stroke="#97a6b1" stroke-width="3"><circle cx="8" cy="10.4" r="6.4"/><circle cx="24.2" cy="10.4" r="6.4"/></g><path d="M1 6.4 L1 5 Q1.2 2.9 3.6 2.9 L28.6 2.9 Q31 2.9 31.2 5 L31.2 6.4 L28 4.9 L4.2 4.9Z" fill="#97a6b1"/></svg>
<div class="t" style="left:430.20px;top:1030px"><span class="p n" id="r24_0" style="left:0.00px;letter-spacing:0.687px">redisTemplate</span><span class="sp"> </span><span class="p e" id="r24_1" style="left:181.10px;letter-spacing:0.000px">=</span><span class="sp"> </span><span class="p g" id="r24_2" style="left:204.10px;letter-spacing:0.085px">{RedisTemplate</span><span class="p g" id="r24_3" style="left:389.30px;letter-spacing:0.229px">@6413}</span></div>
<svg class="ab" style="left:360px;top:1077.6px" width="16" height="18.4" viewBox="0 0 16 18.4"><path d="M0 0 L16 9.2 L0 18.4Z" fill="#a4a6a8"/></svg>
<svg class="ab" style="left:392px;top:1078.5px" width="32" height="20" viewBox="0 0 32 20"><g fill="none" stroke="#97a6b1" stroke-width="3"><circle cx="8" cy="10.4" r="6.4"/><circle cx="24.2" cy="10.4" r="6.4"/></g><path d="M1 6.4 L1 5 Q1.2 2.9 3.6 2.9 L28.6 2.9 Q31 2.9 31.2 5 L31.2 6.4 L28 4.9 L4.2 4.9Z" fill="#97a6b1"/></svg>
<div class="t" style="left:430.20px;top:1068px"><span class="p n" id="r25_0" style="left:0.00px;letter-spacing:0.501px">redisTemplateDB2</span><span class="sp"> </span><span class="p e" id="r25_1" style="left:232.60px;letter-spacing:0.000px">=</span><span class="sp"> </span><span class="p g" id="r25_2" style="left:256.10px;letter-spacing:0.124px">{RedisTemplate</span><span class="p g" id="r25_3" style="left:441.80px;letter-spacing:0.229px">@6414}</span></div>
<!-- frames -->
<div class="ab" style="left:0;top:180px;width:300px;height:281px;overflow:hidden">
<div class="ab" style="left:0;top:0;width:300px;height:40px;background:#2064d2"></div>
<div class="ab" style="left:0;top:40px;width:300px;height:200px;background:#4a453a"></div>
</div>
<div class="ab" style="left:0;top:0;width:300px;height:1170px;overflow:hidden">
<div class="ft fsel" style="left:31.50px;top:180px"><span class="p" id="f0" style="left:0;letter-spacing:1.489px">run:30,</span><span class="sp"> </span><span class="p" id="g0" style="left:97.75px;letter-spacing:0.45px">RedisApplication</span></div>
<div class="ft fdim" style="left:31.50px;top:220px"><span class="p" id="f1" style="left:0;letter-spacing:0.472px">callRunner:784,</span><span class="sp"> </span><span class="p" id="g1" style="left:198.00px;letter-spacing:0.9px">SpringApplication</span></div>
<div class="ft fdim" style="left:31.50px;top:260px"><span class="p" id="f2" style="left:0;letter-spacing:0.531px">callRunners:768,</span><span class="sp"> </span><span class="p" id="g2" style="left:212.00px;letter-spacing:0.9px">SpringApplication</span></div>
<div class="ft fdim" style="left:31.50px;top:300px"><span class="p" id="f3" style="left:0;letter-spacing:1.509px">run:322,</span><span class="sp"> </span><span class="p" id="g3" style="left:114.50px;letter-spacing:0.9px">SpringApplication</span></div>
<div class="ft fdim" style="left:31.50px;top:340px"><span class="p" id="f4" style="left:0;letter-spacing:1.055px">run:1226,</span><span class="sp"> </span><span class="p" id="g4" style="left:126.25px;letter-spacing:0.9px">SpringApplication</span></div>
<div class="ft fdim" style="left:31.50px;top:380px"><span class="p" id="f5" style="left:0;letter-spacing:0.523px">run:1215,</span><span class="sp"> </span><span class="p" id="g5" style="left:122.50px;letter-spacing:0.9px">SpringApplication</span></div>
<div class="ft fnorm" style="left:31.50px;top:420px"><span class="p" id="f6" style="left:0;letter-spacing:0.885px">main:24,</span><span class="sp"> </span><span class="p" id="g6" style="left:114.00px;letter-spacing:0.45px">RedisApplication</span></div>
</div>
<span class="hl dbg" id="l_dbg" style="left:9.50px;top:12.8px;height:40px;line-height:40px;font-size:22px;letter-spacing:0.886px">Debugger</span>
<span class="hl" id="l_con" style="left:169.50px;top:12.8px;height:40px;line-height:40px;font-size:22px;letter-spacing:0.336px">Console</span>
<span class="hl" id="l_end" style="left:344.40px;top:12.8px;height:40px;line-height:40px;font-size:22px;letter-spacing:0.569px">Endpoints</span>
<span class="hl" id="l_frm" style="left:46.00px;top:68.6px;height:40px;line-height:40px;font-size:22px;letter-spacing:0.088px">Frames</span>
<span class="hl" id="l_var" style="left:349.00px;top:68.6px;height:40px;line-height:40px;font-size:22px;letter-spacing:0.427px">Variables</span>
<!-- annotations -->
<div class="an" style="left:893.00px;top:393.3px"><span class="p" id="a0_0" style="left:0.00px;letter-spacing:0.714px">这里我们获取的是</span><span class="p" id="a0_1" style="left:292.00px;letter-spacing:0.059px">redisTemplateDB2</span><span class="p" id="a0_2" style="left:584.00px;letter-spacing:5.000px">的</span><span class="p" id="a0_3" style="left:624.00px;letter-spacing:0.241px">ConnectionFactory</span></div>
<div class="an" style="left:892.00px;top:432.3px"><span class="p" id="a1_0" style="left:0.00px;letter-spacing:0.833px">可以看到当前的</span></div>
<div class="an" style="left:893.00px;top:472.5px"><span class="p" id="a2_0" style="left:0.00px;letter-spacing:0.316px">database=2</span></div>
<div class="an" style="left:892.20px;top:514px"><span class="p" id="a3_0" style="left:0.00px;letter-spacing:0.192px">hostName</span><span class="p" id="a3_1" style="left:168.10px;letter-spacing:-1.900px">=</span><span class="p" id="a3_2" style="left:189.90px;letter-spacing:-2.364px">127.0.0.1</span></div>
<div class="an" style="left:893.00px;top:553px"><span class="p" id="a4_0" style="left:0.00px;letter-spacing:0.625px">这里就是我们希望获取的第二个数据库</span></div>
<!-- green annotation boxes -->
<svg class="ab" style="left:0;top:0;pointer-events:none" width="1896" height="1170" viewBox="0 0 1896 1170">
<rect x="350.2" y="152.5" width="801.4" height="52.6" rx="8" ry="8" fill="none" stroke="#6fea05" stroke-width="6.4"/>
<rect x="370.3" y="681.3" width="958" height="238.2" rx="8.5" ry="8.5" fill="none" stroke="#6fea05" stroke-width="6.6"/>
</svg>

</div></body></html>
